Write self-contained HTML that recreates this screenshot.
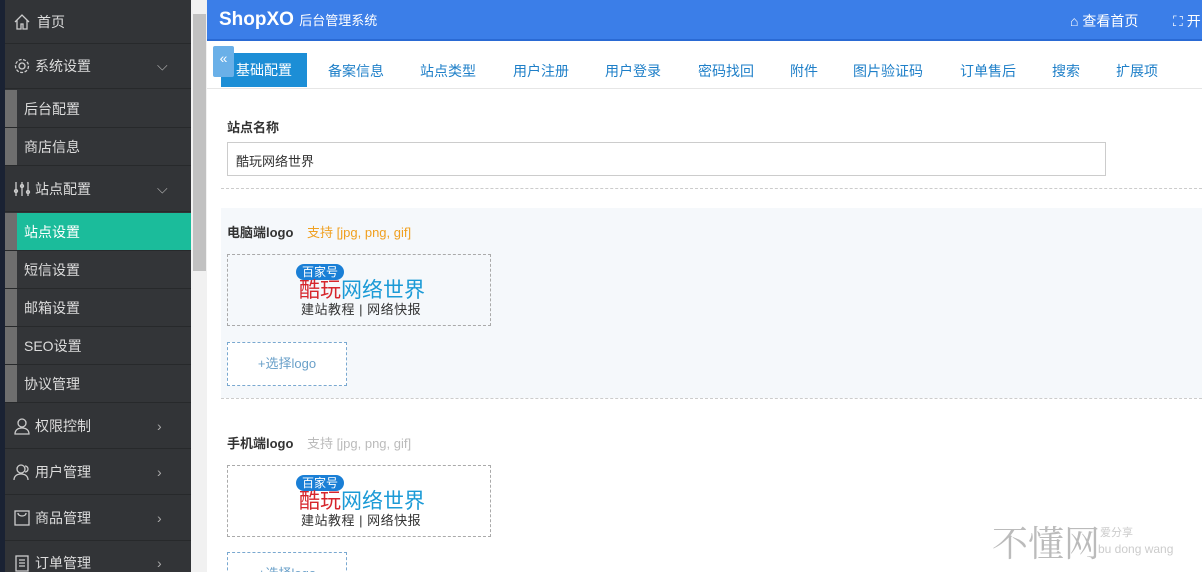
<!DOCTYPE html>
<html style="width:1202px;height:572px;overflow:hidden"><head><meta charset="utf-8"><style>
*{margin:0;padding:0;box-sizing:border-box}
body{width:1202px;height:572px;overflow:hidden;position:relative;background:#fff;font-family:"Liberation Sans","Noto Sans CJK SC",sans-serif;font-size:14px}
.side{position:absolute;left:0;top:0;width:191px;height:572px;background:#323437}
.strip{position:absolute;left:0;top:0;width:5px;height:572px;background:#1a2233}
.it{position:absolute;left:5px;width:186px;color:#dcdcdc;font-size:14px;border-bottom:1px solid #27292b;overflow:hidden}
.it .ic{position:absolute;left:8px;top:50%;transform:translateY(-50%);width:18px;height:18px}
.it .t{position:absolute;left:30px;top:50%;transform:translateY(-50%)}
.it .ar{position:absolute;left:152px;top:50%;transform:translateY(-50%);color:#aaa;font-size:14px}
.sub{position:absolute;left:5px;width:186px;background:#333538;border-bottom:1px solid #27292b}
.sub .bar{position:absolute;left:0;top:0;width:12px;height:100%;background:#6e6e6e}
.sub .t{position:absolute;left:19px;top:50%;transform:translateY(-50%);color:#dcdcdc}
.sb{position:absolute;left:191px;top:0;width:16px;height:572px;background:#f1f1f1}
.thumb{position:absolute;left:193px;top:14px;width:13px;height:257px;background:#c1c1c1}
.hd{position:absolute;left:207px;top:0;width:995px;height:41px;background:#3b7ee8;border-bottom:2px solid #2a6ad4}
.hd .logo{position:absolute;left:12px;top:9px;color:#fff;font-weight:bold;font-size:19px}
.hd .logo span{font-size:13px;font-weight:normal}
.hd .r{position:absolute;top:11px;color:#fff;font-size:14px}
.tabs{position:absolute;left:207px;top:41px;width:995px;height:48px;border-bottom:1px solid #e6e6e6}
.tab{position:absolute;top:20px;color:#1e7fc8;font-size:14px}
.act{position:absolute;left:14px;top:12px;width:86px;height:34px;background:#1c8ed6;color:#fff;font-size:14px;text-align:center;line-height:34px}
.col{position:absolute;left:6px;top:5px;width:21px;height:31px;background:#6ab0e8;color:#fff;font-size:14px;text-align:center;line-height:24px;border-radius:2px}
.lbl{position:absolute;font-weight:bold;font-size:13px;color:#333}
.inp{position:absolute;left:227px;top:142px;width:879px;height:34px;border:1px solid #ccc;padding:8px;font-size:13px;color:#333}
.dash{position:absolute;left:221px;width:981px;border-top:1px dashed #ccc}
.pane{position:absolute;left:221px;top:208px;width:981px;height:190px;background:#f5f8fb}
.box{position:absolute;border:1px dashed #aaa;}
.pick{position:absolute;width:120px;height:44px;border:1px dashed #79a8d0;color:#6aa0c9;font-size:13px;text-align:center;line-height:42px;background:#fff}
.lg{position:absolute;font-size:21px;line-height:22px}
.sl{position:absolute;left:301px;font-size:13px;color:#333;letter-spacing:0.5px}
</style></head><body>
<div class="side"></div>
<div class="strip"></div>
<div class="it" style="top:0;height:44px"><svg class="ic" viewBox="0 0 18 18" fill="none" stroke="#ccc" stroke-width="1.3"><path d="M2 9L9 2l7 7M4 7v9h4v-5h2v5h4V7"/></svg><span class="t" style="left:32px">首页</span></div>
<div class="it" style="top:44px;height:45px"><svg class="ic" viewBox="0 0 18 18" fill="none" stroke="#ccc" stroke-width="1.3"><circle cx="9" cy="9" r="3"/><circle cx="9" cy="9" r="6.5" stroke-dasharray="3 1.5"/></svg><span class="t">系统设置</span><span class="ar">⌵</span></div>
<div class="sub" style="top:90px;height:38px"><div class="bar"></div><span class="t">后台配置</span></div>
<div class="sub" style="top:128px;height:38px"><div class="bar"></div><span class="t">商店信息</span></div>
<div class="it" style="top:166px;height:46px"><svg class="ic" viewBox="0 0 18 18" fill="none" stroke="#ccc" stroke-width="1.3"><path d="M3 2v14M9 2v14M15 2v14"/><circle cx="3" cy="11" r="1.5"/><circle cx="9" cy="6" r="1.5"/><circle cx="15" cy="12" r="1.5"/></svg><span class="t">站点配置</span><span class="ar">⌵</span></div>
<div class="sub" style="top:213px;height:38px;background:#1bbc9b"><div class="bar"></div><span class="t" style="color:#fff">站点设置</span></div>
<div class="sub" style="top:251px;height:38px"><div class="bar"></div><span class="t">短信设置</span></div>
<div class="sub" style="top:289px;height:38px"><div class="bar"></div><span class="t">邮箱设置</span></div>
<div class="sub" style="top:327px;height:38px"><div class="bar"></div><span class="t">SEO设置</span></div>
<div class="sub" style="top:365px;height:38px"><div class="bar"></div><span class="t">协议管理</span></div>
<div class="it" style="top:403px;height:46px"><svg class="ic" viewBox="0 0 18 18" fill="none" stroke="#ccc" stroke-width="1.3"><circle cx="9" cy="6" r="4"/><path d="M2 17c0-4 3-6 7-6s7 2 7 6z"/></svg><span class="t">权限控制</span><span class="ar">›</span></div>
<div class="it" style="top:449px;height:46px"><svg class="ic" viewBox="0 0 18 18" fill="none" stroke="#ccc" stroke-width="1.3"><circle cx="8" cy="6" r="4"/><path d="M1 17c0-4 3-6 7-6s7 2 7 6M12 3a3 3 0 010 6"/></svg><span class="t">用户管理</span><span class="ar">›</span></div>
<div class="it" style="top:495px;height:46px"><svg class="ic" viewBox="0 0 18 18" fill="none" stroke="#ccc" stroke-width="1.3"><rect x="2" y="2" width="14" height="14"/><path d="M5 4c0 4 8 4 8 0"/></svg><span class="t">商品管理</span><span class="ar">›</span></div>
<div class="it" style="top:541px;height:31px;border-bottom:0"><svg class="ic" viewBox="0 0 18 18" fill="none" stroke="#ccc" stroke-width="1.3" style="top:22px"><rect x="3" y="2" width="12" height="15"/><path d="M6 6h6M6 9h6M6 12h6"/></svg><span class="t" style="top:22px">订单管理</span><span class="ar" style="top:22px">›</span></div>
<div class="sb"></div><div class="thumb"></div>
<div class="hd"><div class="logo">ShopXO <span>后台管理系统</span></div>
<div class="r" style="left:863px">⌂ 查看首页</div><div class="r" style="left:966px">⛶ 开</div></div>
<div class="tabs">
<div class="act">基础配置</div><div class="col">«</div>
<span class="tab" style="left:121px">备案信息</span>
<span class="tab" style="left:213px">站点类型</span>
<span class="tab" style="left:306px">用户注册</span>
<span class="tab" style="left:398px">用户登录</span>
<span class="tab" style="left:491px">密码找回</span>
<span class="tab" style="left:583px">附件</span>
<span class="tab" style="left:646px">图片验证码</span>
<span class="tab" style="left:753px">订单售后</span>
<span class="tab" style="left:845px">搜索</span>
<span class="tab" style="left:909px">扩展项</span>
</div>
<div class="lbl" style="left:227px;top:117px">站点名称</div>
<div class="inp">酷玩网络世界</div>
<div class="dash" style="top:188px"></div>
<div class="pane"></div>
<div class="dash" style="top:398px"></div>
<div class="lbl" style="left:227px;top:222px">电脑端logo <span style="font-weight:normal;color:#f0a020;margin-left:10px">支持 [jpg, png, gif]</span></div>
<div class="box" style="left:227px;top:254px;width:264px;height:72px;background:#f5f8fb"></div>
<div class="pick" style="left:227px;top:342px">+选择logo</div>
<div class="lbl" style="left:227px;top:433px">手机端logo <span style="font-weight:normal;color:#bbb;margin-left:10px">支持 [jpg, png, gif]</span></div>
<div class="box" style="left:227px;top:465px;width:264px;height:72px"></div>
<div class="pick" style="left:227px;top:552px">+选择logo</div>
<div style="position:absolute;left:296px;top:264px;width:48px;height:16px;background:#1a7fd6;color:#fff;font-size:12px;line-height:16px;text-align:center;border-radius:8px">百家号</div>
<div class="lg" style="left:299px;top:280px"><span style="color:#d6262c">酷玩</span><span style="color:#1b9ad6">网络世界</span></div>
<div class="sl" style="top:299px">建站教程 | 网络快报</div>
<div style="position:absolute;left:296px;top:475px;width:48px;height:16px;background:#1a7fd6;color:#fff;font-size:12px;line-height:16px;text-align:center;border-radius:8px">百家号</div>
<div class="lg" style="left:299px;top:491px"><span style="color:#d6262c">酷玩</span><span style="color:#1b9ad6">网络世界</span></div>
<div class="sl" style="top:510px">建站教程 | 网络快报</div>
<div style="position:absolute;left:992px;top:516px;font-size:36px;color:#bbb;font-family:'Noto Serif CJK SC',serif">不懂网</div>
<div style="position:absolute;left:1100px;top:524px;font-size:11px;color:#ccc">爱分享</div>
<div style="position:absolute;left:1098px;top:542px;font-size:12px;color:#ccc">bu dong wang</div>
</body></html>
